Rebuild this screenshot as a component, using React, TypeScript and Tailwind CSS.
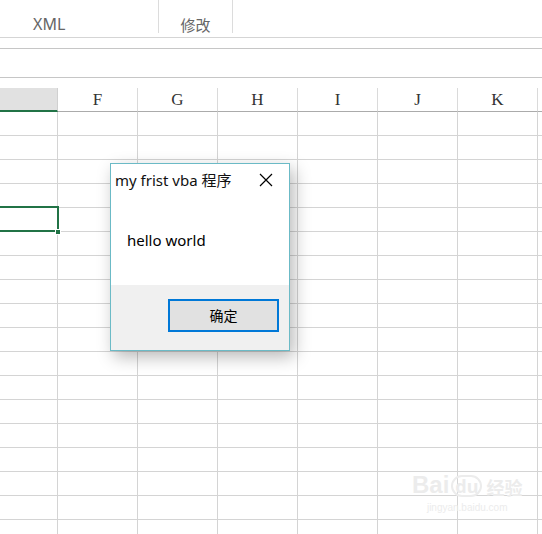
const cols = ['F', 'G', 'H', 'I', 'J', 'K', ''];
const rows = Array.from({ length: 18 }, (_, i) => i);

const ui = { fontFamily: '"Noto Sans", "Noto Sans CJK SC", sans-serif' };

const Ribbon = () => (
    <div className="h-[38px] border-b border-[#d5d5d5] flex items-start bg-white">
        <div className="w-[159px] h-[33px] border-r border-[#dcdcdc] flex flex-col">
            <div className="h-[4px] overflow-hidden">
                <div className="-mt-[10px] flex items-center gap-[3px] pl-[5px] text-[#777] text-[13px] leading-[14px]">
                    <span className="w-[13px] h-[12px] border border-[#888] inline-block" />
                    <span>Resize All</span>
                </div>
            </div>
            <div className="mt-[14px] pl-[33px] text-[16px] leading-[20px] text-[#666]">XML</div>
        </div>
        <div className="w-[74px] h-[33px] border-r border-[#dcdcdc] flex flex-col items-center">
            <div className="mt-[15px] text-[15px] leading-[20px] text-[#666]">修改</div>
        </div>
    </div>
);

const CloseIcon = () => (
    <svg width="14" height="14" viewBox="0 0 14 14" className="text-black">
        <path d="M1 1 L13 13 M13 1 L1 13" stroke="currentColor" strokeWidth="1.2" fill="none" />
    </svg>
);

const Dialog = () => (
    <div className="absolute left-[110px] top-[163px] w-[180px] h-[188px] border border-[#6bbac6] bg-white flex flex-col shadow-[4px_6px_16px_rgba(0,0,0,0.28)]">
        <div className="h-[32px] flex items-center justify-between pl-[4px] pr-[16px]">
            <span className="text-[15px] leading-[18px] text-[#111]">my frist vba 程序</span>
            <CloseIcon />
        </div>
        <div className="h-[89px] pl-[16px] pt-[34px]">
            <div className="text-[15px] leading-[20px] text-black">hello world</div>
        </div>
        <div className="flex-1 bg-[#f0f0f0] flex justify-end items-start pt-[14px] pr-[10px]">
            <button className="w-[111px] h-[33px] border-2 border-[#0078d7] bg-[#e1e1e1] text-[14px] text-black flex items-center justify-center">
                确定
            </button>
        </div>
    </div>
);

const App = () => {
    return (
        <div className="w-[542px] h-[534px] overflow-hidden bg-white relative" style={ui}>
            <Ribbon />
            <div className="h-[10px]" />
            <div className="h-[30px] border-y border-[#c6c6c6]" />
            <div className="h-[10px]" />

            {/* column headers */}
            <div className="flex h-[24px]">
                <div className="w-[58px] shrink-0 bg-[#e1e1e1] border-r border-[#d0d0d0] border-b-2 border-b-[#217346]" />
                {cols.map((c, i) => (
                    <div
                        key={i}
                        className="w-[80px] shrink-0 border-r border-[#dadada] border-b border-b-[#ababab] flex items-center justify-center text-[17px] text-[#333]"
                        style={{ fontFamily: '"Liberation Serif", serif' }}
                    >
                        {c}
                    </div>
                ))}
            </div>

            {/* cells */}
            {rows.map((r) => (
                <div key={r} className="flex h-[24px]">
                    <div className="w-[58px] shrink-0 border-r border-b border-[#d4d4d4]" />
                    {cols.map((_, i) => (
                        <div key={i} className="w-[80px] shrink-0 border-r border-b border-[#d4d4d4]" />
                    ))}
                </div>
            ))}

            {/* active cell */}
            <div className="absolute left-0 top-[206px] w-[59px] h-[26px] border-2 border-l-0 border-[#217346]" />
            <div className="absolute left-[55px] top-[229px] w-[6px] h-[6px] bg-[#217346] border border-white" />

            <Dialog />

            {/* watermark */}
            <div className="absolute left-[412px] top-[473px] flex flex-col items-center text-[#ececec] select-none">
                <div className="flex items-end gap-[2px] leading-none">
                    <span className="text-[24px] font-bold" style={{ fontFamily: '"Liberation Sans", sans-serif' }}>Bai</span>
                    <span className="text-[18px] font-bold border-2 border-[#ececec] rounded-full px-[2px]">du</span>
                    <span className="text-[18px] font-bold ml-[2px]">经验</span>
                </div>
                <div className="text-[10px] mt-[3px]" style={{ fontFamily: '"Liberation Sans", sans-serif' }}>jingyan.baidu.com</div>
            </div>
        </div>
    );
};

export default App;
